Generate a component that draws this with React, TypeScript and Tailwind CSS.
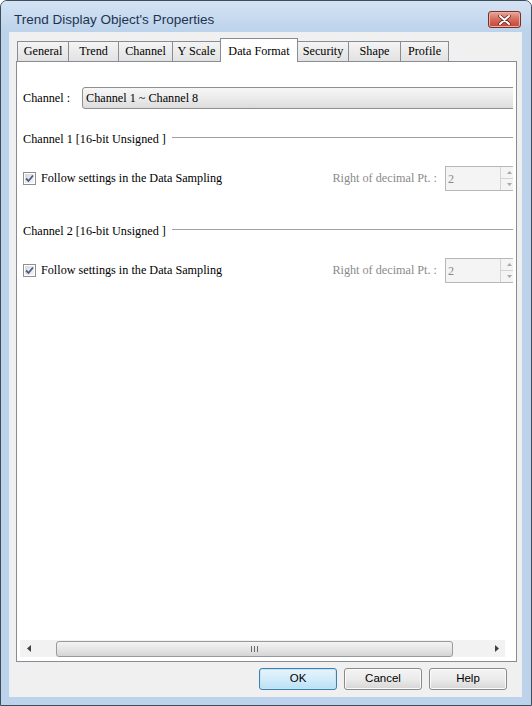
const tabs = [
  { label: "General", cls: "w-[52px]" },
  { label: "Trend", cls: "w-[51px] -ml-px" },
  { label: "Channel", cls: "w-[55px] -ml-px" },
  { label: "Y Scale", cls: "w-[49px] -ml-px" },
  { label: "Data Format", cls: "w-[78px] -ml-px", active: true },
  { label: "Security", cls: "w-[52px] -ml-px" },
  { label: "Shape", cls: "w-[53px] -ml-px" },
  { label: "Profile", cls: "w-[49px] -ml-px" },
];

const CheckBox = () => (
  <div className="w-[13px] h-[13px] border border-[#8f8f8f] bg-white p-px shrink-0">
    <div className="w-full h-full bg-gradient-to-br from-[#d8d8d8] to-[#f6f6f6] flex items-center justify-center">
      <svg width="9" height="9" viewBox="0 0 9 9">
        <path d="M1 4.5 L3.5 7 L8 1.5" fill="none" stroke="#4c5d85" strokeWidth="1.8" />
      </svg>
    </div>
  </div>
);

const SpinBox = () => (
  <div className="w-[73px] h-[25px] border border-[#b5b9bd] bg-[#f4f4f4] flex shrink-0">
    <div className="flex-1 pl-[2px] pt-[3px] text-[#8a8a8a]">2</div>
    <div className="w-[17px] flex flex-col border-l border-[#d4d4d4]">
      <div className="flex-1 flex items-center justify-center border-b border-[#d4d4d4]">
        <svg width="5" height="3" viewBox="0 0 5 3">
          <path d="M0 3 L2.5 0 L5 3 Z" fill="#a8a8a8" />
        </svg>
      </div>
      <div className="flex-1 flex items-center justify-center">
        <svg width="5" height="3" viewBox="0 0 5 3">
          <path d="M0 0 L2.5 3 L5 0 Z" fill="#a8a8a8" />
        </svg>
      </div>
    </div>
  </div>
);

const GroupHeader = ({ title, className }: { title: string; className: string }) => (
  <div className={`flex items-center h-[16px] ${className}`}>
    <span className="whitespace-pre">{title}</span>
    <div className="flex-1 ml-[6px] -mt-[3px] border-t border-[#a0a0a0] border-b border-b-white" />
  </div>
);

const FormatRow = ({ className }: { className: string }) => (
  <div className={`flex items-center justify-between h-[25px] ${className}`}>
    <div className="flex items-center gap-[5px]">
      <CheckBox />
      <span>Follow settings in the Data Sampling</span>
    </div>
    <div className="flex items-center">
      <span className="text-[#8a8a8a]">Right of decimal Pt. :</span>
      <div className="ml-[8px]">
        <SpinBox />
      </div>
    </div>
  </div>
);

const DialogButton = ({ label, primary }: { label: string; primary?: boolean }) => (
  <button
    className={`w-[78px] h-[22px] rounded-[3px] border text-[11.5px] text-black font-['Liberation_Sans',sans-serif] ${
      primary
        ? "border-[#3c7fb1] bg-gradient-to-b from-[#e5f4fc] via-[#d3ecfa] to-[#b9e0f6] shadow-[inset_0_0_0_1px_#c4e5f6]"
        : "border-[#8a8a8a] bg-gradient-to-b from-[#f4f4f4] via-[#ebebeb] to-[#d6d6d6] shadow-[inset_0_0_0_1px_#fbfbfb]"
    }`}
  >
    {label}
  </button>
);

export default function App() {
  return (
    <div className="w-[532px] h-[706px] flex flex-col border border-[#3e4d5e] rounded-t-[7px] bg-[#bcd3eb] overflow-hidden">
      {/* title bar */}
      <div className="h-[31px] flex items-start justify-between bg-gradient-to-b from-[#d4e3f4] to-[#bcd3eb] pl-[13px] pr-[10px]">
        <div className="mt-[11px] leading-[16px] text-[13.5px] text-[#1d3450] font-['Liberation_Sans',sans-serif]">
          Trend Display Object's Properties
        </div>
        <div className="mt-[10px] w-[33px] h-[17px] rounded-[3px] border border-[#7d2d25] bg-gradient-to-b from-[#e8a496] via-[#d56b5c] to-[#c2453a] flex items-center justify-center shadow-[inset_0_0_0_1px_#eab0a6]">
          <svg width="13" height="10" viewBox="0 0 13 10">
            <path d="M2 1 L11 9 M11 1 L2 9" stroke="#5a1f1a" strokeWidth="3.4" strokeLinecap="round" />
            <path d="M2 1 L11 9 M11 1 L2 9" stroke="#ffffff" strokeWidth="2" strokeLinecap="round" />
          </svg>
        </div>
      </div>

      {/* client area */}
      <div className="flex-1 ml-[8px] mr-[9px] mb-[8px] bg-[#f0f0f0] border-l border-l-[#e6eef7] flex flex-col pt-[6px] font-['Liberation_Serif',serif] text-[12.2px] text-black">
        {/* tab strip */}
        <div className="flex items-end h-[23px] pl-[7px]">
          {tabs.map((t) =>
            t.active ? (
              <div
                key={t.label}
                className={`${t.cls} relative z-10 h-[24px] -mb-px bg-white border border-b-0 border-[#898c95] flex items-start justify-center pt-[3px]`}
              >
                {t.label}
              </div>
            ) : (
              <div
                key={t.label}
                className={`${t.cls} h-[20px] border border-b-0 border-[#898c95] bg-gradient-to-b from-[#f4f4f4] to-[#e2e2e2] flex items-center justify-center`}
              >
                {t.label}
              </div>
            )
          )}
        </div>

        {/* tab panel */}
        <div className="ml-[6px] w-[501px] h-[601px] border border-[#898c95] bg-white flex flex-col">
          <div className="flex-1 w-[496px] overflow-hidden">
            <div className="w-[501px] pl-[6px] flex flex-col">
              <div className="flex items-center h-[22px] mt-[25px]">
                <span className="w-[59px] shrink-0">Channel :</span>
                <div className="flex-1 h-[22px] rounded-[3px] border border-[#8e8f8f] bg-gradient-to-b from-[#f6f6f6] via-[#ebebeb] to-[#dcdcdc] flex items-center pl-[3px]">
                  Channel 1 ~ Channel 8
                </div>
              </div>

              <GroupHeader title="Channel 1 [16-bit Unsigned ]" className="mt-[22px]" />
              <FormatRow className="mt-[19px]" />

              <GroupHeader title="Channel 2 [16-bit Unsigned ]" className="mt-[32px]" />
              <FormatRow className="mt-[19px]" />
            </div>
          </div>

          {/* horizontal scrollbar */}
          <div className="ml-[3px] w-[485px] h-[17px] mb-[4px] bg-[#f2f2f2] flex items-center">
            <div className="w-[17px] h-full flex items-center justify-center">
              <svg width="4" height="7" viewBox="0 0 4 7">
                <path d="M4 0 L0 3.5 L4 7 Z" fill="#404040" />
              </svg>
            </div>
            <div className="flex-1 h-full flex items-center pl-[19px] pr-[35px]">
              <div className="flex-1 h-[16px] rounded-[3px] border border-[#9a9a9a] bg-gradient-to-b from-[#f4f4f4] via-[#e6e6e6] to-[#d5d5d5] flex items-center justify-center gap-[2px]">
                <div className="w-px h-[6px] bg-[#6a6a6a]" />
                <div className="w-px h-[6px] bg-[#6a6a6a]" />
                <div className="w-px h-[6px] bg-[#6a6a6a]" />
              </div>
            </div>
            <div className="w-[17px] h-full flex items-center justify-center">
              <svg width="4" height="7" viewBox="0 0 4 7">
                <path d="M0 0 L4 3.5 L0 7 Z" fill="#404040" />
              </svg>
            </div>
          </div>
        </div>

        {/* dialog buttons */}
        <div className="flex justify-end gap-[7px] mt-[6px] pr-[15px]">
          <DialogButton label="OK" primary />
          <DialogButton label="Cancel" />
          <DialogButton label="Help" />
        </div>
      </div>
    </div>
  );
}
